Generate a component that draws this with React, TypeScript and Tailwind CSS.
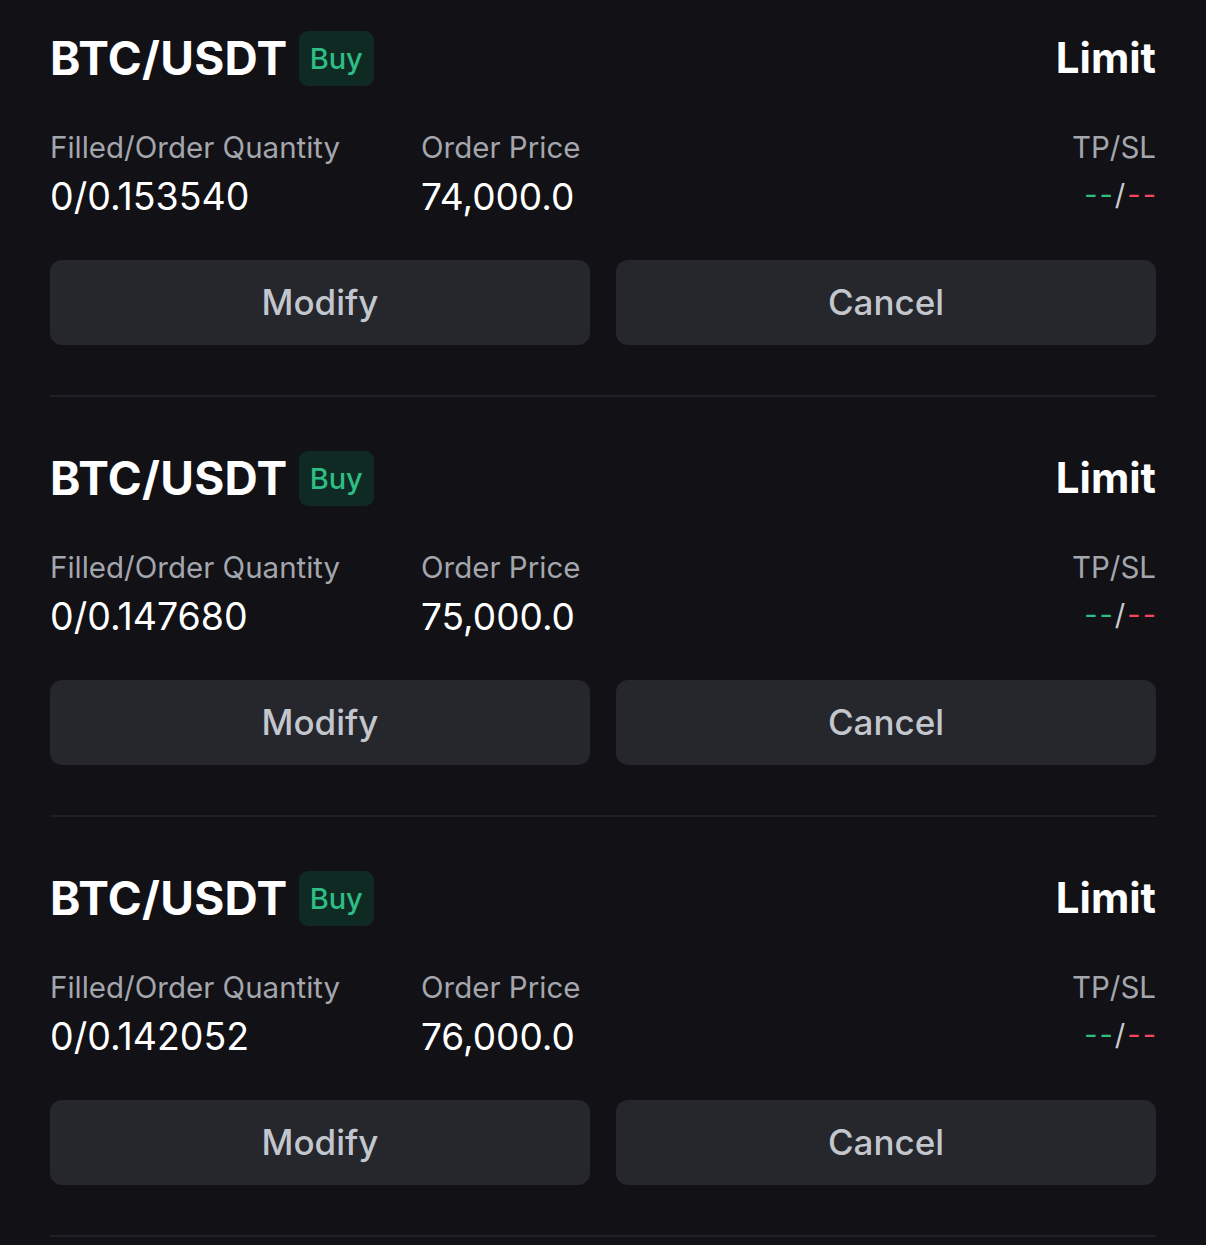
const orders = [
  { qty: '0/0.153540', price: '74,000.0' },
  { qty: '0/0.147680', price: '75,000.0' },
  { qty: '0/0.142052', price: '76,000.0' },
];

// single open order card
const OrderCard = ({ qty, price, first }: { qty: string; price: string; first: boolean }) => {
  return (
    <div className={`${first ? 'pt-[30px]' : 'pt-[53px]'} pb-[50px] border-b-2 border-[#1e2026]`}>
      {/* header: pair + side + type */}
      <div className="flex items-center justify-between h-[56px]">
        <div className="flex items-center gap-[11px]">
          <span className="text-[46px] font-bold text-white leading-none tracking-[0.3px]">BTC/USDT</span>
          <span className="h-[55px] px-[11px] flex items-center rounded-[9px] bg-[#0f2a22] text-[#2ebd85] text-[29px] leading-none font-medium">
            Buy
          </span>
        </div>
        <span className="text-[42px] font-bold text-white leading-none">Limit</span>
      </div>

      {/* details */}
      <div className="flex mt-[41px]">
        <div className="w-[371px]">
          <div className="h-[40px] leading-[40px] text-[29.5px] text-[#a4a6ad]">Filled/Order Quantity</div>
          <div className="mt-[6px] h-[48px] leading-[48px] text-[37.5px] text-white">{qty}</div>
        </div>
        <div className="flex-1">
          <div className="h-[40px] leading-[40px] text-[29.5px] text-[#a4a6ad]">Order Price</div>
          <div className="mt-[6px] h-[48px] leading-[48px] text-[37px] text-white">{price}</div>
        </div>
        <div className="flex flex-col items-end">
          <div className="h-[40px] leading-[40px] text-[29.5px] text-[#a4a6ad]">TP/SL</div>
          <div className="mt-[4px] h-[48px] leading-[48px] text-[29px] whitespace-nowrap flex">
            <span className="text-[#2ebd85] tracking-[2px]">--</span>
            <span className="text-[#c9cbd0] mr-[2px]">/</span>
            <span className="text-[#f6465d] tracking-[2px] mr-[-2px]">--</span>
          </div>
        </div>
      </div>

      {/* actions */}
      <div className="flex gap-[26px] mt-[39px]">
        <button className="flex-1 h-[85px] rounded-[12px] bg-[#25272d] text-[35px] font-medium text-[#c3c6cc]">Modify</button>
        <button className="flex-1 h-[85px] rounded-[12px] bg-[#25272d] text-[35px] font-medium text-[#c3c6cc]">Cancel</button>
      </div>
    </div>
  );
};

export default function App() {
  return (
    <div className="min-h-[1245px] w-full bg-[#111116] px-[50px] font-['Inter',sans-serif]">
      {orders.map((o, i) => (
        <OrderCard key={i} qty={o.qty} price={o.price} first={i === 0} />
      ))}
    </div>
  );
}
